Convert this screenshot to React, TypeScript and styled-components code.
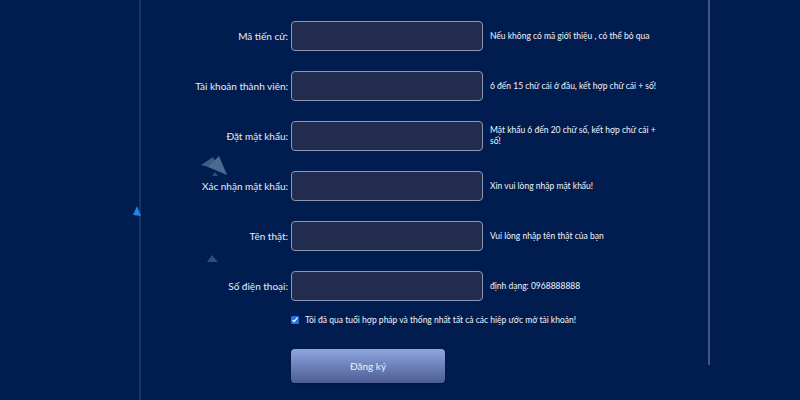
import styled, { createGlobalStyle } from 'styled-components';

const GlobalStyle = createGlobalStyle`
  html, body {
    margin: 0;
    padding: 0;
    background: #011d4f;
  }
  body {
    font-family: Lato, "Noto Sans", sans-serif;
  }
`;

const Page = styled.div`
  position: relative;
  width: 800px;
  height: 400px;
  overflow: hidden;
  background: #011d4f;
  padding-left: 139px;
  box-sizing: border-box;
  display: flex;
`;

const Panel = styled.div`
  display: flex;
  align-items: flex-start;
  border-left: 2px solid #18346a;
  height: 100%;
`;

const Form = styled.form`
  width: 567px;
  padding-top: 21px;
  display: flex;
  flex-direction: column;
  gap: 20px;
`;

const RightRule = styled.div`
  width: 2px;
  height: 365px;
  background: #3f5586;
`;

const Row = styled.div`
  display: grid;
  grid-template-columns: 147px 192px 172px;
  column-gap: 3px;
  align-items: center;
  height: 30px;
`;

const Label = styled.label`
  text-align: right;
  font-size: 10px;
  color: #e9edf6;
  white-space: nowrap;
`;

const Input = styled.input`
  box-sizing: border-box;
  width: 192px;
  height: 30px;
  margin: 0;
  background: #222c4e;
  border: 1.5px solid #8d96b3;
  border-radius: 4px;
  outline: none;
  color: #fff;
`;

const Hint = styled.span`
  margin-left: 4px;
  font-size: 8.5px;
  line-height: 11px;
  color: #f2f4fa;
`;

const CheckRow = styled.label`
  display: flex;
  align-items: center;
  gap: 6px;
  margin: -8px 0 0 150px;
  height: 14px;
  font-size: 8.5px;
  color: #f2f4fa;
  white-space: nowrap;
`;

const Check = styled.input`
  width: 8px;
  height: 8px;
  margin: 0;
  accent-color: #1a73e8;
`;

const Submit = styled.button`
  margin: 2px 0 0 150px;
  width: 154px;
  height: 34px;
  border: none;
  border-radius: 4px;
  background: linear-gradient(#8ea5df, #4c5d93);
  color: #eceff7;
  font-family: inherit;
  font-size: 10px;
  box-shadow: 0 1px 2px rgba(0, 0, 0, 0.3);
`;

const Decor = styled.svg`
  position: absolute;
  left: 0;
  top: 0;
  pointer-events: none;
`;

const fields = [
  { label: 'Mã tiến cử:', hint: 'Nếu không có mã giới thiệu , có thể bỏ qua' },
  { label: 'Tài khoản thành viên:', hint: '6 đến 15 chữ cái ở đầu, kết hợp chữ cái + số!' },
  { label: 'Đặt mật khẩu:', hint: 'Mật khẩu 6 đến 20 chữ số, kết hợp chữ cái + số!' },
  { label: 'Xác nhận mật khẩu:', hint: 'Xin vui lòng nhập mật khẩu!' },
  { label: 'Tên thật:', hint: 'Vui lòng nhập tên thật của bạn' },
  { label: 'Số điện thoại:', hint: 'định dạng: 0968888888' },
];

export default function App() {
  return (
    <>
      <GlobalStyle />
      <Page>
        <Panel>
          <Form onSubmit={(e) => e.preventDefault()}>
            {fields.map((f) => (
              <Row key={f.label}>
                <Label>{f.label}</Label>
                <Input type="text" />
                <Hint>{f.hint}</Hint>
              </Row>
            ))}
            <CheckRow>
              <Check type="checkbox" defaultChecked />
              Tôi đã qua tuổi hợp pháp và thống nhất tất cả các hiệp ước mở tài khoản!
            </CheckRow>
            <Submit type="submit">Đăng ký</Submit>
          </Form>
          <RightRule />
        </Panel>
        <Decor width="800" height="400" viewBox="0 0 800 400">
          <polygon points="201,165 213,157 220,170" fill="#3b5d82" />
          <polygon points="208,167 219,156 227,175" fill="#4a6c8f" />
          <polygon points="212,176 215,172 218,176" fill="#2f4f78" />
          <polygon points="133,215 137,206 141,216" fill="#1e88e5" />
          <polygon points="207,262 212,255 218,262" fill="#2d4d7a" />
        </Decor>
      </Page>
    </>
  );
}
